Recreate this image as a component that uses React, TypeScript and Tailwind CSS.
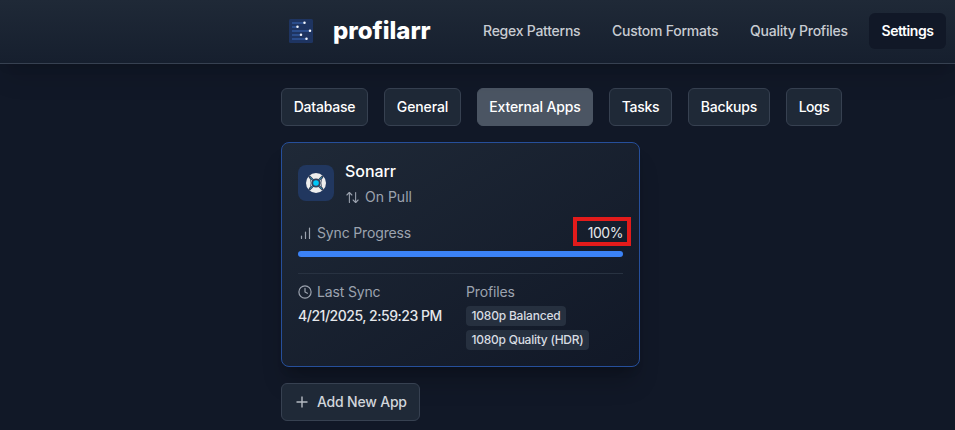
import React from 'react';
import { ArrowDownUp } from 'lucide-react';

const navItems = [
  { label: 'Regex Patterns', box: 'w-[97px]' },
  { label: 'Custom Formats', box: 'w-[106px]' },
  { label: 'Quality Profiles', box: 'w-[99px]' },
];

const tabs = [
  { label: 'Database', box: 'w-[87px]', track: 'tracking-[-0.2px]' },
  { label: 'General', box: 'w-[77px]', track: 'tracking-[-0.1px]' },
  { label: 'External Apps', box: 'w-[116px]', track: 'tracking-[-0.15px]', active: true },
  { label: 'Tasks', box: 'w-[63px]', track: 'tracking-[-0.3px]' },
  { label: 'Backups', box: 'w-[82px]', track: 'tracking-[-0.2px]' },
  { label: 'Logs', box: 'w-[56px]', track: 'tracking-[-0.5px]' },
];

function Logo() {
  const rows = [
    [4, 15.5],
    [8, 8.5],
    [12, 21],
    [16, 12],
    [20, 17.5],
  ];
  return (
    <svg className="h-6 w-6 shrink-0" viewBox="0 0 24 24">
      <rect width="24" height="24" rx="1.5" fill="#1e3461" />
      {rows.map(([y, x]) => (
        <g key={y}>
          <rect x="3" y={y - 1} width={x - 3} height="2" fill="#2b4d8c" />
          <circle cx={x} cy={y - 0.3} r="1.25" fill="#f4f7fc" />
        </g>
      ))}
    </svg>
  );
}

function SonarrIcon() {
  return (
    <svg className="h-5 w-5" viewBox="0 0 20 20">
      <circle cx="10" cy="10" r="10" fill="#eee" />
      <path d="M3 3 L17 17 M17 3 L3 17" stroke="#34425c" strokeWidth="2.2" />
      <path d="M2.8 3.2 Q7.5 10 2.8 16.8 M17.2 3.2 Q12.5 10 17.2 16.8" fill="none" stroke="#34425c" strokeWidth="0.9" />
      <circle cx="10" cy="10" r="4.5" fill="#34425c" />
      <path d="M4 4 L7 7 M16 4 L13 7 M4 16 L7 13 M16 16 L13 13" stroke="#2590b5" strokeWidth="0.8" />
      <circle cx="10" cy="10" r="2.8" fill="#00c8f8" />
    </svg>
  );
}

export default function App() {
  return (
    <div className="flex h-[430px] w-[955px] flex-col overflow-hidden bg-[#111827] font-['Inter',sans-serif] text-sm text-white">
      <header className="z-10 flex h-16 shrink-0 items-center border-b border-[#374151] bg-linear-to-b from-[#1f2937] to-[#161f2e] pr-[9px] pb-px pl-[289px] shadow-xl shadow-black/10">
        <Logo />
        <h1 className="ml-5 w-[98px] text-2xl font-extrabold tracking-[0px] whitespace-nowrap">profilarr</h1>
        <nav className="ml-[52px] flex items-center gap-8 font-medium whitespace-nowrap text-[#c8ccd2]">
          {navItems.map((n) => (
            <a key={n.label} className={`${n.box} tracking-[-0.25px]`}>{n.label}</a>
          ))}
        </nav>
        <a className="ml-5 flex h-9 w-[77px] items-center justify-center rounded-md bg-[#111827] font-semibold tracking-[-0.45px]">Settings</a>
      </header>

      <main className="flex flex-col pt-6 pl-[281px]">
        <div className="flex gap-4">
          {tabs.map((t) => (
            <button
              key={t.label}
              className={`${t.box} ${t.track} flex h-[38px] items-center justify-center rounded-md border font-medium whitespace-nowrap ${
                t.active ? 'border-[#4b5563] bg-[#4b5563]' : 'border-[#374151] bg-[#1f2937]'
              }`}
            >
              {t.label}
            </button>
          ))}
        </div>

        <section className="mt-4 h-[225px] w-[359px] rounded-lg border border-[#264f9b] bg-linear-to-br from-[#1f2937] to-[#111827] px-4 pt-[15px] shadow-xl shadow-black/20">
          <div className="flex h-[50px] items-center">
            <div className="flex h-9 w-9 items-center justify-center rounded-lg bg-[#21375f]">
              <SonarrIcon />
            </div>
            <div className="ml-[11px]">
              <h3 className="text-base leading-6 font-medium tracking-[-0.05px]">Sonarr</h3>
              <div className="mt-1 flex h-5 items-center text-[#9ca3af]">
                <ArrowDownUp className="mr-[5px] h-[15px] w-[15px] -scale-x-100" strokeWidth={1.7} />
                <span>On Pull</span>
              </div>
            </div>
          </div>

          <div className="mt-[15px] flex h-5 items-center text-[#9ca3af]">
            <svg className="mr-[5px] h-3.5 w-3.5" viewBox="0 0 14 14" stroke="#9ca3af" strokeWidth="1.2" strokeLinecap="round">
              <path d="M3.5 10v2.5M7.5 6v6.5M11.5 2v10.5" />
            </svg>
            <span className="tracking-[-0.15px]">Sync Progress</span>
            <span className="ml-auto tracking-[-0.45px] text-[#e5e7eb]">100%</span>
          </div>
          <div className="mt-2 h-1.5 rounded-full bg-[#3b82f6]" />

          <div className="mt-4 flex border-t border-[#283241] pt-2">
            <div className="w-[168px]">
              <div className="flex h-5 items-center text-[#9ca3af]">
                <svg className="mr-[5px] h-3.5 w-3.5" viewBox="0 0 14 14" fill="none" stroke="#9ca3af" strokeWidth="1.2" strokeLinecap="round" strokeLinejoin="round">
                  <circle cx="7" cy="7" r="6.1" />
                  <path d="M7 3.4V7l2.4 1.3" />
                </svg>
                <span className="tracking-[-0.15px]">Last Sync</span>
              </div>
              <p className="mt-1 leading-5 font-medium tracking-[-0.48px] whitespace-nowrap text-[#e5e7eb]">4/21/2025, 2:59:23 PM</p>
            </div>
            <div className="flex flex-col items-start">
              <span className="h-5 leading-5 tracking-[-0.15px] text-[#9ca3af]">Profiles</span>
              <span className="mt-1 flex h-5 w-[100px] items-center justify-center rounded bg-[#26303f] text-xs font-medium tracking-[-0.2px] whitespace-nowrap text-[#d8dce2]">1080p Balanced</span>
              <span className="mt-1 flex h-5 w-[123px] items-center justify-center rounded bg-[#26303f] text-xs font-medium tracking-[-0.25px] whitespace-nowrap text-[#d8dce2]">1080p Quality (HDR)</span>
            </div>
          </div>
        </section>

        <button className="mt-4 flex h-[38px] w-[139px] items-center rounded-md border border-[#374151] bg-[#1f2937] pl-[14px] font-medium tracking-[-0.2px] whitespace-nowrap text-[#d1d5db]">
          <svg className="mr-[9px] h-3 w-3" viewBox="0 0 12 12" stroke="#b5bac2" strokeWidth="1.4">
            <path d="M6 .5v11M.5 6h11" />
          </svg>
          Add New App
        </button>
      </main>

      {/* Highlight frame drawn over the progress value */}
      <div className="absolute top-[217px] left-[573px] h-[29px] w-[58px] border-4 border-[#e31b1b]" />
    </div>
  );
}
